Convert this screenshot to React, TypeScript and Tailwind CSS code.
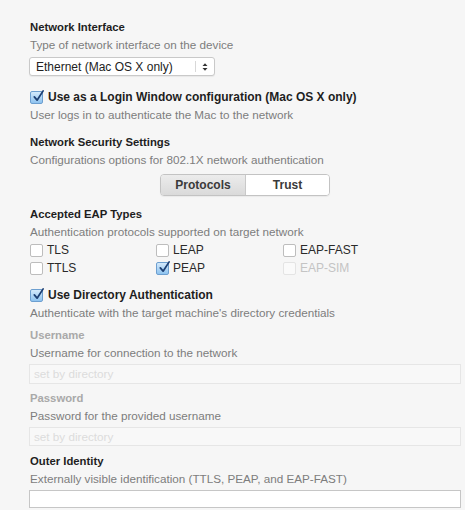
import React from "react";

function Check({ checked, disabled }: { checked?: boolean; disabled?: boolean }) {
  if (checked) {
    return (
      <span className="relative inline-block w-[13px] h-[13px] rounded-[2px] border border-[#6d9fd0] bg-gradient-to-b from-[#d3e9fb] to-[#8ec3ef] shrink-0">
        <svg viewBox="0 0 14 14" className="absolute left-[1px] top-[-3px] w-[13px] h-[14px]">
          <path d="M2.5 8 L5.5 11.5 L12 1.5" fill="none" stroke="#1d3f73" strokeWidth="1.9" strokeLinecap="round" strokeLinejoin="round" />
        </svg>
      </span>
    );
  }
  return (
    <span
      className={
        disabled
          ? "inline-block w-[13px] h-[13px] rounded-[2px] border border-[#e4e4e4] bg-[#fafafa] shrink-0"
          : "inline-block w-[13px] h-[13px] rounded-[2px] border border-[#bdbdbd] bg-white shrink-0"
      }
    />
  );
}

function Title({ children, muted }: { children: React.ReactNode; muted?: boolean }) {
  return (
    <div className={muted ? "h-[18px] leading-[18px] text-[11.3px] font-bold text-[#a9a9a9]" : "h-[18px] leading-[18px] text-[11.3px] font-bold text-[#1e1e1e]"}>
      {children}
    </div>
  );
}

function Desc({ children }: { children: React.ReactNode }) {
  return <div className="h-[18px] leading-[18px] text-[11.7px] text-[#7d7d7d] whitespace-nowrap">{children}</div>;
}

function Opt({ label, checked, disabled }: { label: string; checked?: boolean; disabled?: boolean }) {
  return (
    <div className="h-[18px] flex items-center gap-[4px]">
      <Check checked={checked} disabled={disabled} />
      <span className={disabled ? "text-[12px] text-[#c4c4c4]" : "text-[12px] text-[#2a2a2a]"}>{label}</span>
    </div>
  );
}

export default function App() {
  return (
    <div
      className="w-[465px] h-[510px] bg-[#f6f6f6] pt-[18px] pl-[30px] pr-[4px] text-[11px] overflow-hidden"
      style={{ fontFamily: '"Liberation Sans", Arial, Helvetica, sans-serif' }}
    >
      <Title>Network Interface</Title>
      <Desc>Type of network interface on the device</Desc>
      <div className="mt-[3px] -ml-px w-[186px] h-[19px] bg-white border border-[#c9c9c9] rounded-[3px] shadow-[0_1px_1px_rgba(0,0,0,0.06)] flex items-center">
        <span className="flex-1 pl-[6px] text-[12px] text-[#222]">Ethernet (Mac OS X only)</span>
        <span className="w-px h-[11px] bg-[#d8d8d8]" />
        <svg viewBox="0 0 8 10" className="w-[8px] h-[10px] mx-[5px]">
          <path d="M1.5 4 L4 1.2 L6.5 4 Z M1.5 6 L4 8.8 L6.5 6 Z" fill="#333" />
        </svg>
      </div>

      <div className="mt-[12px] h-[18px] flex items-center gap-[5px]">
        <Check checked />
        <span className="text-[12px] font-bold text-[#1e1e1e]">Use as a Login Window configuration (Mac OS X only)</span>
      </div>
      <Desc>User logs in to authenticate the Mac to the network</Desc>

      <div className="mt-[9px]">
        <Title>Network Security Settings</Title>
        <Desc>Configurations options for 802.1X network authentication</Desc>
      </div>
      <div className="mt-[5px] ml-[130px] w-[170px] h-[22px] flex border border-[#c3c3c3] rounded-[4px] overflow-hidden shadow-[0_1px_1px_rgba(0,0,0,0.05)] text-[12px]">
        <div className="w-[85px] h-full flex items-center justify-center bg-gradient-to-b from-[#ececec] to-[#dadada] border-r border-[#c9c9c9] font-bold text-[#3a3a3a]">
          Protocols
        </div>
        <div className="flex-1 h-full flex items-center justify-center bg-white font-bold text-[#3a3a3a]">Trust</div>
      </div>

      <div className="mt-[9px]">
        <Title>Accepted EAP Types</Title>
        <Desc>Authentication protocols supported on target network</Desc>
      </div>
      <div className="grid grid-cols-[126px_127px_126px]">
        <Opt label="TLS" />
        <Opt label="LEAP" />
        <Opt label="EAP-FAST" />
        <Opt label="TTLS" />
        <Opt label="PEAP" checked />
        <Opt label="EAP-SIM" disabled />
      </div>

      <div className="mt-[9px] h-[18px] flex items-center gap-[5px]">
        <Check checked />
        <span className="text-[12px] font-bold text-[#1e1e1e]">Use Directory Authentication</span>
      </div>
      <Desc>Authenticate with the target machine's directory credentials</Desc>

      <div className="mt-[4px]">
        <Title muted>Username</Title>
        <Desc>Username for connection to the network</Desc>
      </div>
      <div className="mt-[2px] -ml-px h-[20px] border border-[#e6e6e6] bg-[#f8f8f8] flex items-center pl-[4px] text-[11.7px] text-[#dcdcdc]">
        set by directory
      </div>

      <div className="mt-[5px]">
        <Title muted>Password</Title>
        <Desc>Password for the provided username</Desc>
      </div>
      <div className="mt-[2px] -ml-px h-[19px] border border-[#e6e6e6] bg-[#f8f8f8] flex items-center pl-[4px] text-[11.7px] text-[#dcdcdc]">
        set by directory
      </div>

      <div className="mt-[6px]">
        <Title>Outer Identity</Title>
        <Desc>Externally visible identification (TTLS, PEAP, and EAP-FAST)</Desc>
      </div>
      <div className="mt-[2px] -ml-px h-[18px] border border-[#c6c6c6] bg-white" />
    </div>
  );
}
